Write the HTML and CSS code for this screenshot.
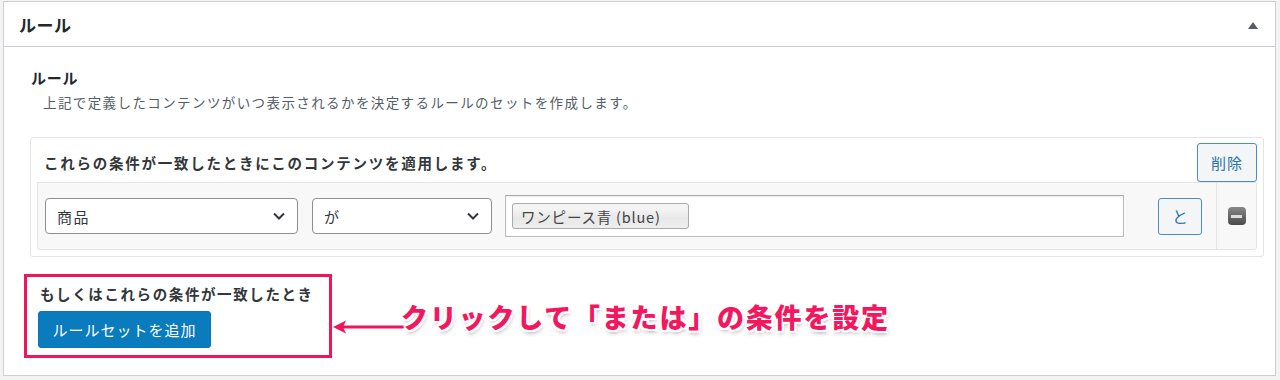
FILE: index.html
```html
<!DOCTYPE html>
<html lang="ja">
<head>
<meta charset="utf-8">
<title>ルール</title>
<link rel="stylesheet" href="styles.css">
</head>
<body>
<div class="panel">
  <div class="panel-head">
    <h2 class="panel-title">ルール</h2>
    <svg class="toggle" width="10" height="7" viewBox="0 0 10 7"><polygon points="5,0 10,7 0,7" fill="#555d66"/></svg>
  </div>
  <div class="panel-body">
    <div class="field-label">ルール</div>
    <p class="field-desc">上記で定義したコンテンツがいつ表示されるかを決定するルールのセットを作成します。</p>

    <div class="group">
      <div class="group-head">
        <div class="group-title">これらの条件が一致したときにこのコンテンツを適用します。</div>
        <button class="btn btn-secondary btn-del">削除</button>
      </div>
      <div class="rule-row">
        <div class="rule-fields">
          <div class="select select-param">
            <span>商品</span>
            <svg class="chev" width="12" height="8" viewBox="0 0 12 8"><polyline points="1,1.5 6,6.5 11,1.5" fill="none" stroke="#32373c" stroke-width="2"/></svg>
          </div>
          <div class="select select-op">
            <span>が</span>
            <svg class="chev" width="12" height="8" viewBox="0 0 12 8"><polyline points="1,1.5 6,6.5 11,1.5" fill="none" stroke="#32373c" stroke-width="2"/></svg>
          </div>
          <div class="tag-input">
            <span class="chip">ワンピース青 (blue)</span>
          </div>
          <button class="btn btn-secondary btn-and">と</button>
        </div>
        <div class="rule-remove">
          <span class="minus"><span class="minus-bar"></span></span>
        </div>
      </div>
    </div>

    <div class="or-area">
      <div class="or-box">
        <div class="or-title">もしくはこれらの条件が一致したとき</div>
        <button class="btn btn-primary">ルールセットを追加</button>
      </div>
      <svg class="arrow" width="72" height="14" viewBox="0 0 72 14"><line x1="8" y1="7" x2="72" y2="7" stroke="#f0145a" stroke-width="3"/><polygon points="0,7 13,0.5 10,7 13,13.5" fill="#f0145a"/></svg>
      <div class="note">クリックして「または」の条件を設定</div>
    </div>
  </div>
</div>
</body>
</html>
```

FILE: styles.css
```css
* { box-sizing: border-box; }

body {
  margin: 0;
  background: #f3f3f3;
  font-family: "Noto Sans CJK JP", "Noto Sans", sans-serif;
  color: #23282d;
}

.panel {
  margin: 1px 4px 0 3px;
  background: #fff;
  border: 1px solid #ccd0d4;
  height: 375px;
}

.panel-head {
  height: 45px;
  border-bottom: 1px solid #ccd0d4;
  display: flex;
  align-items: center;
  justify-content: space-between;
  padding: 0 17px 0 15px;
}

.panel-title {
  margin: 0;
  font-size: 17px;
  font-weight: 700;
  letter-spacing: 0.5px;
  line-height: 1;
}

.toggle { display: block; margin-top: 2px; }

.panel-body {
  padding: 21px 11px 0 26px;
}

.field-label {
  font-size: 15px;
  font-weight: 700;
  line-height: 20px;
  padding-left: 1px;
  letter-spacing: 0.8px;
}

.field-desc {
  margin: 4px 0 0 13px;
  font-size: 13.5px;
  line-height: 20px;
  color: #555d66;
  letter-spacing: 1.4px;
}

.group {
  margin-top: 25px;
  border: 1px solid #e2e4e7;
  border-radius: 3px;
  padding: 5px 6px 6px 6px;
  background: #fff;
}

.group-head {
  display: flex;
  align-items: center;
  justify-content: space-between;
}

.group-title {
  padding-left: 7px;
  font-size: 14.5px;
  font-weight: 700;
  letter-spacing: 1.75px;
  color: #32373c;
}

.btn {
  font-family: inherit;
  cursor: pointer;
  border-radius: 3px;
  line-height: 1;
}

.btn-secondary {
  background: #f3f5f6;
  border: 1px solid #4a8fc4;
  color: #2a73ad;
}

.btn-del {
  width: 60px;
  height: 39px;
  font-size: 15px;
  letter-spacing: 1px;
  padding: 0;
}

.rule-row {
  display: flex;
  height: 68px;
  background: #f8f8f8;
  border: 1px solid #e5e5e5;
  border-radius: 0 0 3px 3px;
}

.rule-fields {
  flex: 1;
  display: flex;
  align-items: center;
  padding-left: 7px;
}

.select {
  height: 36px;
  border: 1px solid #8c8f94;
  border-radius: 4px;
  background: #fff;
  display: flex;
  align-items: center;
  justify-content: space-between;
  padding: 0 12px 0 11px;
  font-size: 15px;
  letter-spacing: 1.5px;
  color: #32373c;
}

.select-param { width: 253px; margin-right: 14px; }
.select-op { width: 180px; margin-right: 13px; }
.chev { display: block; }

.tag-input {
  width: 619px;
  height: 42px;
  border: 1px solid #bbb;
  border-top-color: #aaa;
  box-shadow: inset 0 1px 2px rgba(0,0,0,0.08);
  background: #fff;
  display: flex;
  align-items: center;
  padding-left: 6px;
  margin-right: 34px;
}

.chip {
  display: inline-flex;
  align-items: center;
  height: 26px;
  width: 177px;
  padding-left: 8px;
  border: 1px solid #aaa;
  border-radius: 3px;
  background: linear-gradient(#f4f4f4 20%, #e8e8e8 60%, #eee);
  font-size: 14.5px;
  color: #444;
  letter-spacing: 0.8px;
}

.btn-and {
  width: 44px;
  height: 37px;
  font-size: 16px;
  padding: 0;
}

.rule-remove {
  width: 40px;
  border-left: 1px solid #e5e5e5;
  display: flex;
  align-items: center;
  justify-content: center;
  margin-left: 13px;
}

.minus {
  width: 18px;
  height: 18px;
  border-radius: 4px;
  background: linear-gradient(#888, #4a4a4a);
  display: flex;
  align-items: center;
  justify-content: center;
}

.minus-bar {
  width: 11px;
  height: 3px;
  background: #ddd;
}

.or-area {
  margin: 17px 0 0 -6px;
  display: flex;
  align-items: center;
}

.or-box {
  width: 308px;
  height: 84px;
  border: 3px solid #f0145a;
  padding: 7px 0 0 11px;
}

.or-title {
  font-size: 14.5px;
  font-weight: 700;
  line-height: 20px;
  letter-spacing: 1.6px;
  color: #32373c;
  margin-left: 2px;
}

.btn-primary {
  margin-top: 7px;
  width: 173px;
  height: 37px;
  background: #0a7bbd;
  border: 1px solid #0a76b4;
  color: #fff;
  font-size: 15px;
  letter-spacing: 1px;
  padding: 0;
}

.arrow {
  display: block;
  margin: 22px 0 0 1px;
}

.note {
  margin-left: -4px;
  font-size: 27px;
  font-weight: 900;
  letter-spacing: 1.8px;
  color: #f5175d;
  line-height: 1;
  text-shadow:
    2px 0 0 #fff, -2px 0 0 #fff, 0 2px 0 #fff, 0 -2px 0 #fff,
    2px 2px 0 #fff, -2px -2px 0 #fff, 2px -2px 0 #fff, -2px 2px 0 #fff,
    1px 3px 4px rgba(0,0,0,0.35);
}
```
